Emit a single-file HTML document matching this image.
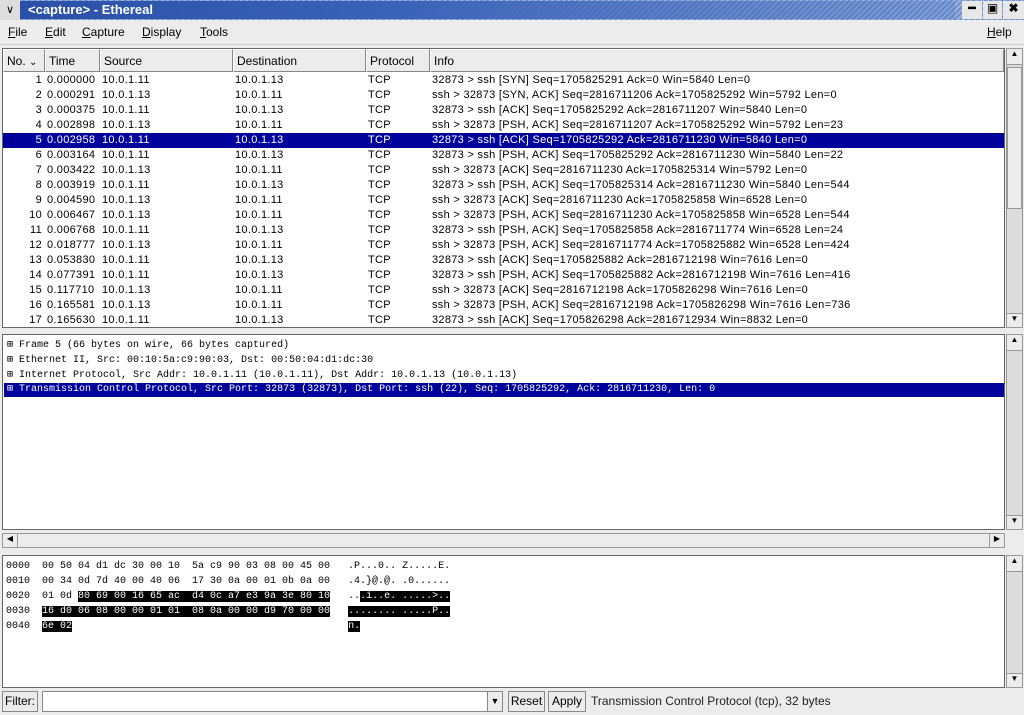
<!DOCTYPE html>
<html><head><style>
*{margin:0;padding:0;box-sizing:border-box}
body{width:1024px;height:715px;background:#ececec;font-family:"Liberation Sans",sans-serif;font-size:12px;position:relative;overflow:hidden;color:#000}
.a{position:absolute}
.title{left:0;top:0;width:1024px;height:20px;background:repeating-linear-gradient(135deg,#6f8fc8 0 2px,#9ab3e0 2px 4px);}
.title .bar{position:absolute;left:20px;top:1px;width:935px;height:18px;background:linear-gradient(90deg,#2b50a8 0%,#3a62b8 40%,rgba(80,115,195,0.3) 100%)}
.menu span{position:absolute;top:25px;font-size:12px}
.pl{left:2px;top:48px;width:1003px;height:280px;background:#fff;border:1px solid #666}
.hdr{position:absolute;top:0;height:23px;background:#ececec;border:1px solid #888;border-top-color:#fff;border-left-color:#fff;font-size:12px;padding:4px 3px}
.row{position:absolute;left:0;width:1001px;height:15px;font-size:11px;line-height:15px;white-space:pre;letter-spacing:0.3px}
.row span{position:absolute}
.sel{background:#00009c;color:#fff}
.mono{font-family:"Liberation Mono",monospace;font-size:10px;white-space:pre}
.sb{background:#dcdcdc;border:1px solid #999}
.btn{position:absolute;background:#ececec;border:1px solid #888;font-size:12px;text-align:center}
</style></head><body>
<div class="a title"><div class="bar"></div>
<div class="a" style="left:0;top:0;width:20px;height:20px;background:#ddd;text-align:center;font-size:11px;line-height:20px">&#8744;</div>
<div class="a" style="left:28px;top:2px;color:#fff;font-weight:bold;font-size:13px">&lt;capture&gt; - Ethereal</div>
<div class="a" style="left:962px;top:1px;width:20px;height:18px;background:#e8e8e8;text-align:center;font-weight:bold">&#9473;</div>
<div class="a" style="left:983px;top:1px;width:19px;height:18px;background:#e8e8e8;text-align:center">&#9635;</div>
<div class="a" style="left:1003px;top:1px;width:21px;height:18px;background:#e8e8e8;text-align:center;font-weight:bold">&#10006;</div>
</div>
<div class="menu"><span style="left:8px"><u>F</u>ile</span><span style="left:45px"><u>E</u>dit</span><span style="left:82px"><u>C</u>apture</span><span style="left:142px"><u>D</u>isplay</span><span style="left:200px"><u>T</u>ools</span><span style="left:987px"><u>H</u>elp</span></div>
<div class="a" style="left:0;top:44px;width:1024px;height:1px;background:#ccc"></div>
<div class="a pl">
<div class="hdr" style="left:0;width:42px">No. <small>⌄</small></div>
<div class="hdr" style="left:42px;width:55px">Time</div>
<div class="hdr" style="left:97px;width:133px">Source</div>
<div class="hdr" style="left:230px;width:133px">Destination</div>
<div class="hdr" style="left:363px;width:64px">Protocol</div>
<div class="hdr" style="left:427px;width:574px">Info</div>
<div id="rows"></div>
</div>
<div class="a sb" style="left:1006px;top:48px;width:17px;height:280px"><div style="height:16px;background:#ececec;border-bottom:1px solid #999;text-align:center;font-size:8px">▲</div><div class="a" style="left:0;top:18px;width:15px;height:142px;background:#ececec;border:1px solid #999"></div><div class="a" style="left:0;bottom:0;width:15px;height:14px;background:#ececec;border-top:1px solid #999;text-align:center;font-size:8px">▼</div></div>
<div class="a" style="left:2px;top:334px;width:1003px;height:196px;background:#fff;border:1px solid #666">
<div class="a mono" style="left:4px;top:3px;line-height:15px">⊞ Frame 5 (66 bytes on wire, 66 bytes captured)
⊞ Ethernet II, Src: 00:10:5a:c9:90:03, Dst: 00:50:04:d1:dc:30
⊞ Internet Protocol, Src Addr: 10.0.1.11 (10.0.1.11), Dst Addr: 10.0.1.13 (10.0.1.13)</div>
<div class="a mono sel" style="left:1px;top:48px;width:1000px;height:14px;line-height:14px;padding-left:3px">⊞ Transmission Control Protocol, Src Port: 32873 (32873), Dst Port: ssh (22), Seq: 1705825292, Ack: 2816711230, Len: 0</div>
</div>
<div class="a sb" style="left:1006px;top:334px;width:17px;height:196px"><div style="height:16px;background:#ececec;border-bottom:1px solid #999;text-align:center;font-size:8px">▲</div><div class="a" style="left:0;bottom:0;width:15px;height:14px;background:#ececec;border-top:1px solid #999;text-align:center;font-size:8px">▼</div></div>
<div class="a sb" style="left:2px;top:533px;width:1003px;height:15px;background:#ececec"><div style="width:15px;height:13px;border-right:1px solid #999;font-size:8px;text-align:center">◀</div><div class="a" style="right:0;top:0;width:15px;height:13px;border-left:1px solid #999;font-size:8px;text-align:center">▶</div></div>
<div class="a" style="left:2px;top:555px;width:1003px;height:133px;background:#fff;border:1px solid #666">
<div class="a mono" style="left:3px;top:3px;line-height:15px">0000  00 50 04 d1 dc 30 00 10  5a c9 90 03 08 00 45 00   .P...0.. Z.....E.
0010  00 34 0d 7d 40 00 40 06  17 30 0a 00 01 0b 0a 00   .4.}@.@. .0......
0020  01 0d <span style="background:#000;color:#fff">80 69 00 16 65 ac  d4 0c a7 e3 9a 3e 80 10</span>   ..<span style="background:#000;color:#fff">.i..e. .....&gt;..</span>
0030  <span style="background:#000;color:#fff">16 d0 06 08 00 00 01 01  08 0a 00 00 d9 70 00 00</span>   <span style="background:#000;color:#fff">........ .....P..</span>
0040  <span style="background:#000;color:#fff">6e 02</span>                                              <span style="background:#000;color:#fff">n.</span></div>
</div>
<div class="a sb" style="left:1006px;top:555px;width:17px;height:133px"><div style="height:16px;background:#ececec;border-bottom:1px solid #999;text-align:center;font-size:8px">▲</div><div class="a" style="left:0;bottom:0;width:15px;height:14px;background:#ececec;border-top:1px solid #999;text-align:center;font-size:8px">▼</div></div>
<div class="btn" style="left:2px;top:691px;width:36px;height:21px;line-height:19px">Filter:</div>
<div class="a" style="left:42px;top:691px;width:446px;height:21px;background:#fff;border:1px solid #888"></div>
<div class="btn" style="left:487px;top:691px;width:16px;height:21px;font-size:9px;line-height:19px">▼</div>
<div class="btn" style="left:508px;top:691px;width:37px;height:21px;line-height:19px">Reset</div>
<div class="btn" style="left:548px;top:691px;width:38px;height:21px;line-height:19px">Apply</div>
<div class="a" style="left:591px;top:694px;font-size:12px;color:#222">Transmission Control Protocol (tcp), 32 bytes</div>
<script>
var d=[["0.000000","10.0.1.11","10.0.1.13","32873 > ssh [SYN] Seq=1705825291 Ack=0 Win=5840 Len=0"],
["0.000291","10.0.1.13","10.0.1.11","ssh > 32873 [SYN, ACK] Seq=2816711206 Ack=1705825292 Win=5792 Len=0"],
["0.000375","10.0.1.11","10.0.1.13","32873 > ssh [ACK] Seq=1705825292 Ack=2816711207 Win=5840 Len=0"],
["0.002898","10.0.1.13","10.0.1.11","ssh > 32873 [PSH, ACK] Seq=2816711207 Ack=1705825292 Win=5792 Len=23"],
["0.002958","10.0.1.11","10.0.1.13","32873 > ssh [ACK] Seq=1705825292 Ack=2816711230 Win=5840 Len=0"],
["0.003164","10.0.1.11","10.0.1.13","32873 > ssh [PSH, ACK] Seq=1705825292 Ack=2816711230 Win=5840 Len=22"],
["0.003422","10.0.1.13","10.0.1.11","ssh > 32873 [ACK] Seq=2816711230 Ack=1705825314 Win=5792 Len=0"],
["0.003919","10.0.1.11","10.0.1.13","32873 > ssh [PSH, ACK] Seq=1705825314 Ack=2816711230 Win=5840 Len=544"],
["0.004590","10.0.1.13","10.0.1.11","ssh > 32873 [ACK] Seq=2816711230 Ack=1705825858 Win=6528 Len=0"],
["0.006467","10.0.1.13","10.0.1.11","ssh > 32873 [PSH, ACK] Seq=2816711230 Ack=1705825858 Win=6528 Len=544"],
["0.006768","10.0.1.11","10.0.1.13","32873 > ssh [PSH, ACK] Seq=1705825858 Ack=2816711774 Win=6528 Len=24"],
["0.018777","10.0.1.13","10.0.1.11","ssh > 32873 [PSH, ACK] Seq=2816711774 Ack=1705825882 Win=6528 Len=424"],
["0.053830","10.0.1.11","10.0.1.13","32873 > ssh [ACK] Seq=1705825882 Ack=2816712198 Win=7616 Len=0"],
["0.077391","10.0.1.11","10.0.1.13","32873 > ssh [PSH, ACK] Seq=1705825882 Ack=2816712198 Win=7616 Len=416"],
["0.117710","10.0.1.13","10.0.1.11","ssh > 32873 [ACK] Seq=2816712198 Ack=1705826298 Win=7616 Len=0"],
["0.165581","10.0.1.13","10.0.1.11","ssh > 32873 [PSH, ACK] Seq=2816712198 Ack=1705826298 Win=7616 Len=736"],
["0.165630","10.0.1.11","10.0.1.13","32873 > ssh [ACK] Seq=1705826298 Ack=2816712934 Win=8832 Len=0"]];
var h="";d.forEach(function(r,i){h+='<div class="row'+(i==4?' sel':'')+'" style="top:'+(24+i*15)+'px"><span style="right:962px">'+(i+1)+'</span><span style="left:44px">'+r[0]+'</span><span style="left:99px">'+r[1]+'</span><span style="left:232px">'+r[2]+'</span><span style="left:365px">TCP</span><span style="left:429px">'+r[3].replace(/>/g,'&gt;')+'</span></div>';});
document.getElementById("rows").innerHTML=h;
</script>
</body></html>
